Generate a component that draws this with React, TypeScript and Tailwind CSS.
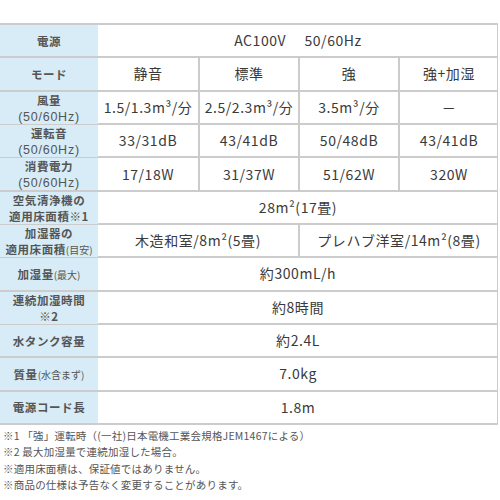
import React from 'react';

type Cell = { text: React.ReactNode; span?: number };
type Row = { label: React.ReactNode[]; cells: Cell[] };

const Sub = ({ children }: { children: React.ReactNode }) => (
  <span className="text-[10px] font-normal tracking-normal">{children}</span>
);

const Hz = () => (
  <span
    className="font-normal text-[12.5px] tracking-[0.06em] text-[#555555]"
    style={{ fontFamily: '"Liberation Sans", Arial, sans-serif' }}
  >
    (50/60Hz)
  </span>
);

const rows: Row[] = [
  { label: ['電源'], cells: [{ text: 'AC100V\u3000 50/60Hz', span: 4 }] },
  { label: ['モード'], cells: [{ text: '静音' }, { text: '標準' }, { text: '強' }, { text: '強+加湿' }] },
  {
    label: ['風量', <Hz />],
    cells: [{ text: '1.5/1.3m³/分' }, { text: '2.5/2.3m³/分' }, { text: '3.5m³/分' }, { text: '－' }],
  },
  {
    label: ['運転音', <Hz />],
    cells: [{ text: '33/31dB' }, { text: '43/41dB' }, { text: '50/48dB' }, { text: '43/41dB' }],
  },
  {
    label: ['消費電力', <Hz />],
    cells: [{ text: '17/18W' }, { text: '31/37W' }, { text: '51/62W' }, { text: '320W' }],
  },
  {
    label: ['空気清浄機の', '適用床面積※1'],
    cells: [{ text: '28m²(17畳)', span: 4 }],
  },
  {
    label: ['加湿器の', <>適用床面積<Sub>(目安)</Sub></>],
    cells: [{ text: '木造和室/8m²(5畳)', span: 2 }, { text: 'プレハブ洋室/14m²(8畳)', span: 2 }],
  },
  { label: [<>加湿量<Sub>(最大)</Sub></>], cells: [{ text: '約300mL/h', span: 4 }] },
  { label: ['連続加湿時間', '※2'], cells: [{ text: '約8時間', span: 4 }] },
  { label: ['水タンク容量'], cells: [{ text: '約2.4L', span: 4 }] },
  { label: [<>質量<Sub>(水含まず)</Sub></>], cells: [{ text: '7.0kg', span: 4 }] },
  { label: ['電源コード長'], cells: [{ text: '1.8m', span: 4 }] },
];

const notes = [
  '※1 「強」運転時（(一社)日本電機工業会規格JEM1467による）',
  '※2 最大加湿量で連続加湿した場合。',
  '※適用床面積は、保証値ではありません。',
  '※商品の仕様は予告なく変更することがあります。',
];

export default function App() {
  return (
    <div
      className="w-[500px] h-[500px] bg-white overflow-hidden text-[#3d3d3d]"
      style={{ fontFamily: '"Noto Sans CJK JP", "Noto Sans", sans-serif' }}
    >
      <div className="h-[23px]" />
      <div className="w-[498px] border-t-2 border-r border-[#cccccc]">
        {rows.map((row, i) => (
          <div
            key={i}
            className="grid grid-cols-[98px_100px_100px_100px_100px] h-[33.33px] border-b-2 border-[#cccccc]"
          >
            <div className="bg-[#d7ecf7] flex flex-col items-center justify-center text-center text-[11.5px] font-bold tracking-[0.05em] text-[#555555]">
              {row.label.map((l, k) => (
                <div key={k} className="h-[16px] leading-[16px] whitespace-nowrap">
                  {l}
                </div>
              ))}
            </div>
            {row.cells.map((c, j) => (
              <div
                key={j}
                className={
                  'flex items-center justify-center text-[14px] tracking-[0.04em] text-[#3a3a3a] ' +
                  (j > 0 ? 'border-l-2 border-[#cccccc] ' : '') +
                  (c.span === 4 ? 'col-span-4' : c.span === 2 ? 'col-span-2' : '')
                }
              >
                {c.text}
              </div>
            ))}
          </div>
        ))}
      </div>
      <div className="pt-[3px] pl-[3px] text-[10.5px] leading-[16.5px] tracking-[0.02em] text-[#555555]">
        {notes.map((n, i) => (
          <div key={i}>{n}</div>
        ))}
      </div>
    </div>
  );
}
